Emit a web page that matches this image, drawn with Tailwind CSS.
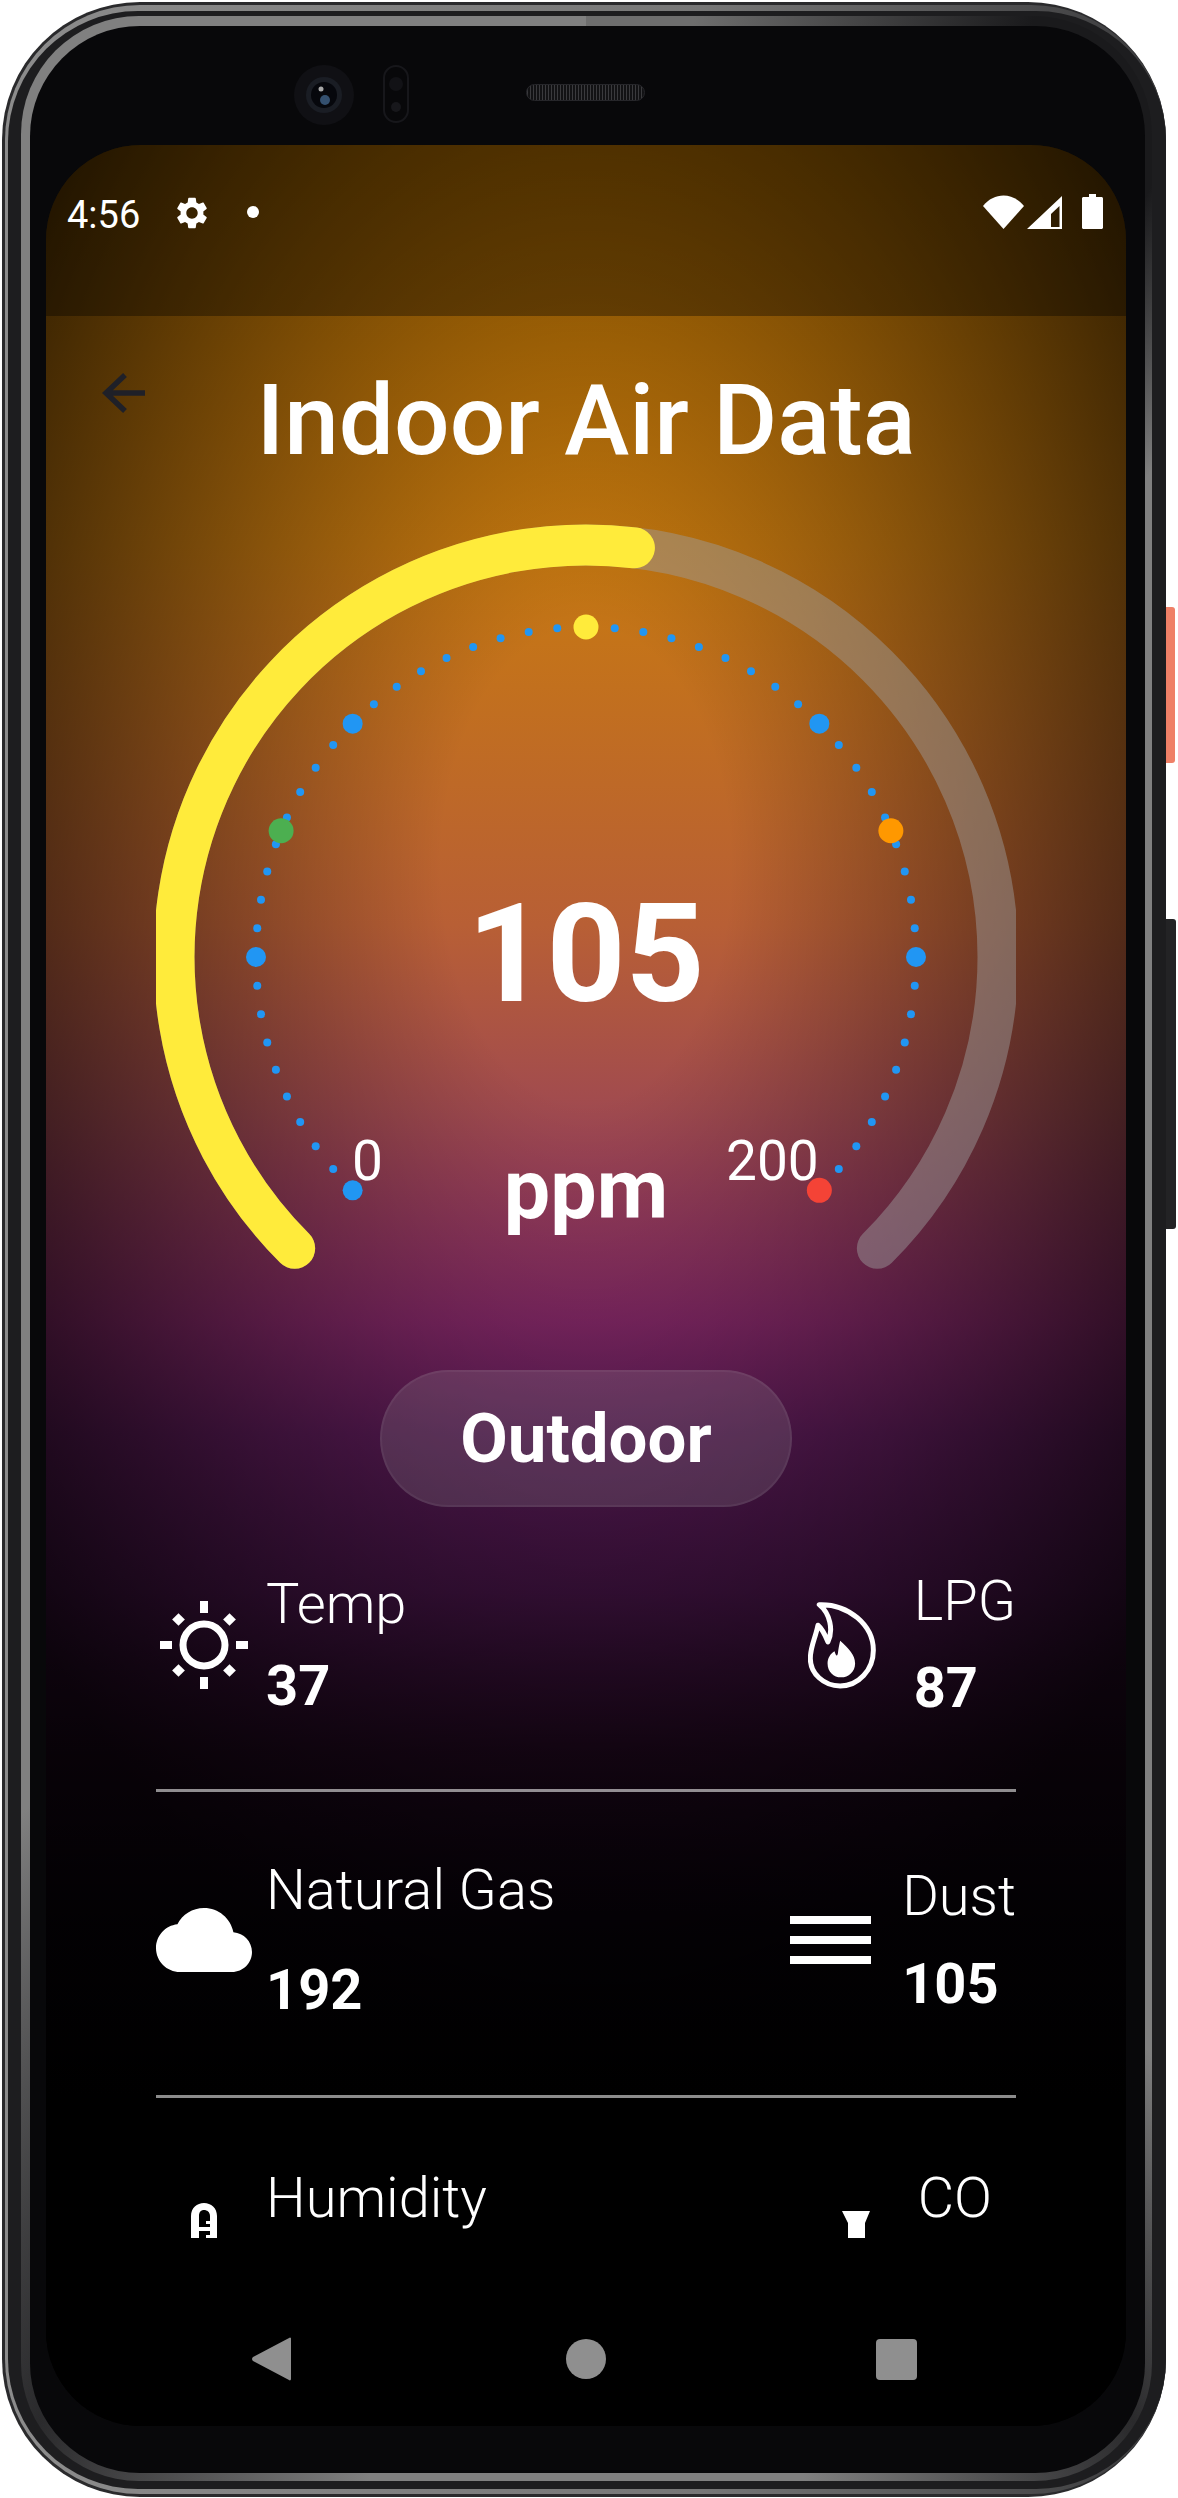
<!DOCTYPE html>
<html lang="en">
<head>
    <meta charset="UTF-8">
    <meta name="viewport" content="width=device-width, initial-scale=1.0">
    <title>Indoor Air Data</title>
    <script src="https://cdn.jsdelivr.net/npm/@tailwindcss/browser@4"></script>
</head>
<body class="bg-white font-['Roboto',sans-serif] text-white">
    <div class="relative w-[1178px] h-[2498px] overflow-hidden">
        <!-- side buttons -->
        <div class="absolute left-[1165px] top-[607px] w-[10px] h-[156px] rounded-r-[3px] bg-[#ef8067]"></div>
        <div class="absolute left-[1165px] top-[919px] w-[11px] h-[310px] rounded-r-[3px] bg-[#232325]"></div>

        <!-- phone body, ring by ring -->
        <div class="relative ml-[2px] mt-[2px] w-[1164px] h-[2495px] rounded-[138px] bg-[#2a2a2c] pt-[3px] pl-[3px] pb-[3px]">
            <div class="h-full rounded-[135px] bg-[linear-gradient(90deg,#8c8c8c_0%,#777_60%,#3a3a3c_100%)] pt-[6px] pl-[3px] pb-[5px]">
                <div class="h-full rounded-[130px] bg-[#1d1d1f] pt-[5px] pl-[13px] pb-[8px] pr-[14px]">
                    <div class="h-full rounded-[118px] bg-[conic-gradient(#6e6e6e_5deg,#1a1a1c_20deg,#1a1a1c_28deg,#808080_36deg,#808080_145deg,#2a2a2c_155deg,#808080_170deg,#808080_190deg,#2a2a2c_205deg,#808080_225deg,#808080_360deg)] pt-[10px] pl-[9px] pr-[7px] pb-[8px]">
                        <div class="flex flex-col h-full rounded-[110px] bg-[#08080a] pl-[16px] pr-[19px] pb-[47px]">
                            <!-- top bezel -->
                            <div class="flex items-start h-[119px] shrink-0 pl-[248px] pt-[39px]">
                                <svg width="60" height="60" viewBox="0 0 60 60" class="shrink-0">
                                    <circle cx="30" cy="30" r="30" fill="#101014"/>
                                    <circle cx="30" cy="30" r="18" fill="#1a1d24"/>
                                    <circle cx="30" cy="30" r="13" fill="#06070c"/>
                                    <circle cx="31" cy="35" r="5" fill="#34506f"/>
                                    <circle cx="27" cy="24" r="2.5" fill="#a8a8a8"/>
                                </svg>
                                <div class="w-[26px] h-[58px] ml-[29px] rounded-full border-2 border-[#17171b] flex flex-col items-center justify-around py-1">
                                    <div class="w-[14px] h-[14px] rounded-full bg-[#121216]"></div>
                                    <div class="w-[10px] h-[10px] rounded-full bg-[#17171b]"></div>
                                </div>
                                <div class="w-[119px] h-[17px] ml-[117px] mt-[19px] rounded-full border border-[#26262a] bg-[repeating-linear-gradient(90deg,#3a3a3d_0_1px,#121214_1px_3px)]"></div>
                            </div>

                            <!-- screen -->
                            <div class="relative flex flex-col flex-1 rounded-[95px] overflow-hidden bg-[radial-gradient(ellipse_720px_1180px_at_540px_720px,transparent_20%,rgba(0,0,0,0.8)_100%),linear-gradient(180deg,#d08000_0px,#c87a10_400px,#b85f35_780px,#a04a50_970px,#8a2a6c_1177px,#691f64_1289px,#511752_1448px,#280a26_1607px,#0d0310_1767px,#000_1950px)]">
                                <!-- status bar -->
                                <div class="relative h-[171px] shrink-0 bg-black/35">
                                    <span class="absolute left-[21px] top-[48px] text-[38px] leading-[45px]">4:56</span>
                                    <svg class="absolute left-[127px] top-[49px]" width="38" height="38" viewBox="0 0 24 24" fill="#fff">
                                        <path d="M19.14 12.94c.04-.3.06-.61.06-.94s-.02-.64-.07-.94l2.03-1.58c.18-.14.23-.41.12-.61l-1.92-3.32c-.12-.22-.37-.29-.59-.22l-2.39.96c-.5-.38-1.03-.7-1.62-.94l-.36-2.54c-.04-.24-.24-.41-.48-.41h-3.84c-.24 0-.43.17-.47.41l-.36 2.54c-.59.24-1.13.57-1.62.94l-2.39-.96c-.22-.08-.47 0-.59.22L2.74 8.87c-.12.21-.08.47.12.61l2.03 1.58c-.05.3-.09.63-.09.94s.02.64.07.94l-2.03 1.58c-.18.14-.23.41-.12.61l1.92 3.32c.12.22.37.29.59.22l2.39-.96c.5.38 1.03.7 1.62.94l.36 2.54c.05.24.24.41.48.41h3.84c.24 0 .44-.17.47-.41l.36-2.54c.59-.24 1.13-.56 1.62-.94l2.39.96c.22.08.47 0 .59-.22l1.92-3.32c.12-.22.07-.47-.12-.61l-2.01-1.58zM12 15.6c-1.98 0-3.6-1.62-3.6-3.6s1.62-3.6 3.6-3.6 3.6 1.62 3.6 3.6-1.62 3.6-3.6 3.6z"/>
                                    </svg>
                                    <div class="absolute left-[201px] top-[61px] w-[12px] h-[12px] rounded-full bg-white"></div>
                                    <svg class="absolute left-[937px] top-[50px]" width="41" height="34" viewBox="0 0 41 34" fill="#fff"><path d="M0 11C11 -3 30 -3 41 11L20.5 34Z"/></svg>
                                    <svg class="absolute left-[981px] top-[51px]" width="35" height="33" viewBox="0 0 35 33"><path fill-rule="evenodd" fill="#fff" d="M0 33L35 0V33ZM24 31H32.5V10L24 18Z"/></svg>
                                    <svg class="absolute left-[1036px] top-[49px]" width="21" height="35" viewBox="0 0 21 35" fill="#fff"><path d="M7 0H14V3H19.500C20.300 3 21 3.700 21 4.500V33.500C21 34.300 20.300 35 19.500 35H1.500C.7 35 0 34.300 0 33.500V4.500C0 3.700 .7 3 1.500 3H7Z"/></svg>
                                </div>

                                <!-- scrolling body -->
                                <div class="relative flex flex-col h-[1922px] shrink-0 overflow-hidden px-[110px] pt-[48px]">
                                    <svg class="absolute left-[53px] top-[53px]" width="48" height="48" viewBox="0 0 48 48" fill="none" stroke="#1f2028" stroke-width="5.500">
                                        <path d="M46 24H7M26 6L7 24L26 42"/>
                                    </svg>
                                    <h1 class="h-[113px] shrink-0 text-center text-[98px] leading-[113px] font-medium whitespace-nowrap">Indoor Air Data</h1>

                                    <!-- gauge -->
                                    <div class="relative mt-[2px] w-[860px] h-[810px] shrink-0">
                                        <svg id="gauge" class="block" width="860" height="810" viewBox="156 480 860 810"></svg>
                                        <span class="absolute left-[196px] top-[650px] text-[55px] leading-[64px]">0</span>
                                        <span class="absolute left-[570px] top-[650px] text-[55px] leading-[64px]">200</span>
                                        <div class="absolute inset-x-0 top-[394px] text-center text-[138px] leading-[162px] font-bold">105</div>
                                        <div class="absolute inset-x-0 top-[662px] text-center text-[82.5px] leading-[97px] font-bold">ppm</div>
                                    </div>

                                    <!-- mode button -->
                                    <div class="flex justify-center mt-[81px] shrink-0">
                                        <button class="w-[412px] h-[137px] rounded-full bg-[#9e9e9e]/20 border-2 border-white/5 text-[69px] font-bold">Outdoor</button>
                                    </div>

                                    <!-- readings -->
                                    <div class="flex items-center justify-between h-[285px] shrink-0 pb-[7px] border-b-[3px] border-white/55">
                                        <div class="flex items-center">
                                            <svg class="ml-[4px] mr-[18px]" width="88" height="88" viewBox="0 0 88 88" fill="#fff">
                                                <circle cx="44" cy="44" r="21" fill="none" stroke="#fff" stroke-width="7"/>
                                                <rect x="40" y="0" width="8" height="12"/><rect x="40" y="76" width="8" height="12"/>
                                                <rect x="0" y="40" width="12" height="8"/><rect x="76" y="40" width="12" height="8"/>
                                                <rect x="14" y="14" width="9" height="9" transform="rotate(45 18.500 18.500)"/>
                                                <rect x="65" y="14" width="9" height="9" transform="rotate(45 69.500 18.500)"/>
                                                <rect x="14" y="65" width="9" height="9" transform="rotate(45 18.500 69.500)"/>
                                                <rect x="65" y="65" width="9" height="9" transform="rotate(45 69.500 69.500)"/>
                                            </svg>
                                            <div>
                                                <p class="text-[56px] leading-[64px] font-light">Temp</p>
                                                <p class="mt-[18px] text-[56px] leading-[64px] font-bold">37</p>
                                            </div>
                                        </div>
                                        <div class="flex items-center">
                                            <svg class="mr-[38px]" width="68" height="89" viewBox="148 190 205 266" fill="none">
                                                <path stroke="#fff" stroke-width="15" stroke-linejoin="round" d="M182 203C270 200 345 265 345 340C345 400 300 448 245 448C195 448 155 410 155 365C155 330 170 305 178 265C190 275 200 295 208 315C225 280 215 230 182 203Z"/>
                                                <path fill="#fff" d="M245 312C270 335 290 355 290 380C290 405 270 422 248 422C225 422 207 405 207 380C207 365 215 350 228 343C232 355 235 362 238 350C240 335 242 325 245 312Z"/>
                                            </svg>
                                            <div>
                                                <p class="text-[56px] leading-[64px] font-light">LPG</p>
                                                <p class="mt-[23px] text-[56px] leading-[64px] font-bold">87</p>
                                            </div>
                                        </div>
                                    </div>
                                    <div class="flex items-center justify-between h-[306px] shrink-0 pb-[7px] border-b-[3px] border-white/55">
                                        <div class="flex items-center">
                                            <svg class="mr-[14px]" width="96" height="96" viewBox="0 0 24 24" fill="#fff">
                                                <path d="M19.35 10.04C18.67 6.59 15.64 4 12 4 9.11 4 6.6 5.64 5.35 8.04 2.34 8.36 0 10.91 0 14c0 3.31 2.69 6 6 6h13c2.76 0 5-2.24 5-5 0-2.64-2.05-4.78-4.65-4.96z"/>
                                            </svg>
                                            <div>
                                                <p class="text-[56px] leading-[64px] font-light">Natural Gas</p>
                                                <p class="mt-[36px] text-[56px] leading-[64px] font-bold">192</p>
                                            </div>
                                        </div>
                                        <div class="flex items-center">
                                            <svg class="mr-[31px]" width="81" height="48" viewBox="0 0 81 48" fill="#fff">
                                                <rect y="0" width="81" height="8"/><rect y="20" width="81" height="8"/><rect y="40" width="81" height="8"/>
                                            </svg>
                                            <div>
                                                <p class="text-[56px] leading-[64px] font-light">Dust</p>
                                                <p class="mt-[24px] text-[56px] leading-[64px] font-bold">105</p>
                                            </div>
                                        </div>
                                    </div>
                                    <div class="flex items-start justify-between pt-[68px]">
                                        <div class="flex items-start">
                                            <svg class="ml-[35px] mt-[37px] mr-[49px]" width="26" height="48" viewBox="0 0 26 48" fill="#fff">
                                                <path fill-rule="evenodd" d="M0 13C0 5 6 0 13 0S26 5 26 13V48H0ZM8 13V24H19V21H15V18H19V13C19 9 16 7 13 7S8 9 8 13ZM8 28V48H19V35H15V32H19V28Z"/>
                                            </svg>
                                            <p class="text-[56px] leading-[64px] font-light">Humidity</p>
                                        </div>
                                        <div class="flex items-start pr-[24px]">
                                            <svg class="mt-[45px] mr-[48px]" width="28" height="40" viewBox="0 0 28 40" fill="#fff">
                                                <path d="M0 0H28L23 12V40H6V12Z"/>
                                            </svg>
                                            <p class="text-[56px] leading-[64px] font-light">CO</p>
                                        </div>
                                    </div>
                                </div>

                                <!-- nav bar -->
                                <div class="flex-1 bg-black flex items-start pt-[99px] pl-[206px]">
                                    <svg width="39" height="44" viewBox="0 0 39 44" fill="#8f8f8f"><path d="M38 .5C39 .5 39 1.500 39 2V42C39 43 38 44 37 43L1 24C-.3 23 -.3 21 1 20Z"/></svg>
                                    <div class="ml-[275px] mt-[2px] w-[40px] h-[40px] rounded-full bg-[#8f8f8f]"></div>
                                    <div class="ml-[270px] mt-[2px] w-[41px] h-[41px] rounded-[4px] bg-[#8f8f8f]"></div>
                                </div>
                            </div>
                        </div>
                    </div>
                </div>
            </div>
        </div>
    </div>

    <script>
        // gauge drawing: track, value arc, ticks every 5 degrees
        const cx = 586, cy = 958, arcR = 412, dotR = 330;
        const svg = document.getElementById('gauge');
        const ns = 'http://www.w3.org/2000/svg';

        function pt(deg, r) {
            const a = deg * Math.PI / 180;
            return [cx + r * Math.sin(a), cy - r * Math.cos(a)];
        }
        function add(tag, attrs) {
            const el = document.createElementNS(ns, tag);
            for (const k in attrs) el.setAttribute(k, attrs[k]);
            svg.appendChild(el);
        }
        function arc(from, to, color) {
            const [x1, y1] = pt(from, arcR), [x2, y2] = pt(to, arcR);
            const large = to - from > 180 ? 1 : 0;
            add('path', {
                d: `M${x1} ${y1}A${arcR} ${arcR} 0 ${large} 1 ${x2} ${y2}`,
                fill: 'none', stroke: color, 'stroke-width': 41, 'stroke-linecap': 'round'
            });
        }

        arc(-135, 135, 'rgba(158,158,158,0.47)');
        arc(-135, 6.75, '#ffeb3b');

        for (let d = -135; d <= 135; d += 5) {
            if (d % 45 === 0) continue;
            const [x, y] = pt(d, dotR);
            add('circle', { cx: x, cy: y, r: 4, fill: '#2196f3' });
        }
        const majors = [
            [-135, 10, '#2196f3'], [-90, 10, '#2196f3'], [-67.5, 12.5, '#4caf50'], [-45, 10, '#2196f3'],
            [0, 12.5, '#ffeb3b'], [45, 10, '#2196f3'], [67.5, 12.5, '#ff9800'], [90, 10, '#2196f3'], [135, 12.5, '#f44336']
        ];
        majors.forEach(([d, r, c]) => {
            const [x, y] = pt(d, dotR);
            add('circle', { cx: x, cy: y, r: r, fill: c });
        });
    </script>
</body>
</html>
